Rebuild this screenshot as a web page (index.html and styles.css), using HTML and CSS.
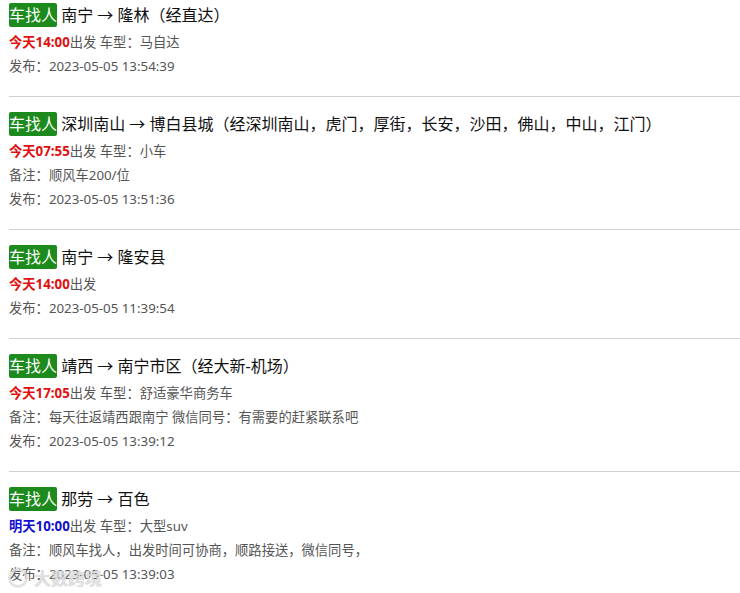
FILE: index.html
```html
<!DOCTYPE html>
<html lang="zh-CN">
<head>
    <meta charset="UTF-8">
    <meta name="viewport" content="width=device-width, initial-scale=1.0">
    <title>车找人</title>
    <link rel="stylesheet" href="styles.css">
</head>
<body>
    <div class="list">
        <div class="item">
            <div class="title"><span class="tag">车找人</span> 南宁 → 隆林（经直达）</div>
            <div class="line"><b class="today">今天14:00</b>出发 车型：马自达</div>
            <div class="line">发布：2023-05-05 13:54:39</div>
        </div>
        <div class="item">
            <div class="title"><span class="tag">车找人</span> 深圳南山 → 博白县城（经深圳南山，虎门，厚街，长安，沙田，佛山，中山，江门）</div>
            <div class="line"><b class="today">今天07:55</b>出发 车型：小车</div>
            <div class="line">备注：顺风车200/位</div>
            <div class="line">发布：2023-05-05 13:51:36</div>
        </div>
        <div class="item">
            <div class="title"><span class="tag">车找人</span> 南宁 → 隆安县</div>
            <div class="line"><b class="today">今天14:00</b>出发</div>
            <div class="line">发布：2023-05-05 11:39:54</div>
        </div>
        <div class="item">
            <div class="title"><span class="tag">车找人</span> 靖西 → 南宁市区（经大新-机场）</div>
            <div class="line"><b class="today">今天17:05</b>出发 车型：舒适豪华商务车</div>
            <div class="line">备注：每天往返靖西跟南宁 微信同号：有需要的赶紧联系吧</div>
            <div class="line">发布：2023-05-05 13:39:12</div>
        </div>
        <div class="item">
            <div class="title"><span class="tag">车找人</span> 那劳 → 百色</div>
            <div class="line"><b class="tomorrow">明天10:00</b>出发 车型：大型suv</div>
            <div class="line">备注：顺风车找人，出发时间可协商，顺路接送，微信同号，</div>
            <div class="line">发布：2023-05-05 13:39:03</div>
        </div>
    </div>

    <!-- 水印 -->
    <div class="watermark"><span class="wm-logo"></span>大数跨境</div>
</body>
</html>
```

FILE: styles.css
```css
body {
    margin: 0;
    font-family: "Noto Sans", "Noto Sans CJK SC", sans-serif;
    background: #fff;
    color: #555;
    overflow: hidden;
}
.list {
    margin-left: 9px;
}
.item {
    padding: 13px 0 18px;
    border-bottom: 1px solid #d0d0d0;
}
.item:first-child {
    padding-top: 1px;
}
.title {
    font-size: 16px;
    line-height: 28px;
    margin-bottom: 1px;
    color: #111;
}
.tag {
    background: #1c8a1c;
    color: #fff;
    padding: 1px 0;
    border-radius: 2px;
}
.line {
    font-size: 13.3px;
    line-height: 24px;
}
.today {
    color: #e01010;
}
.tomorrow {
    color: #1010d0;
}
.watermark {
    position: absolute;
    left: 8px;
    top: 565px;
    font-size: 17px;
    font-weight: bold;
    color: rgba(230, 230, 230, 0.75);
    text-shadow: 0 0 1px rgba(150, 150, 150, 0.5);
    display: flex;
    align-items: center;
    gap: 6px;
}
.wm-logo {
    width: 14px;
    height: 14px;
    border: 3px solid rgba(220, 220, 220, 0.8);
    border-radius: 50%;
}
```
